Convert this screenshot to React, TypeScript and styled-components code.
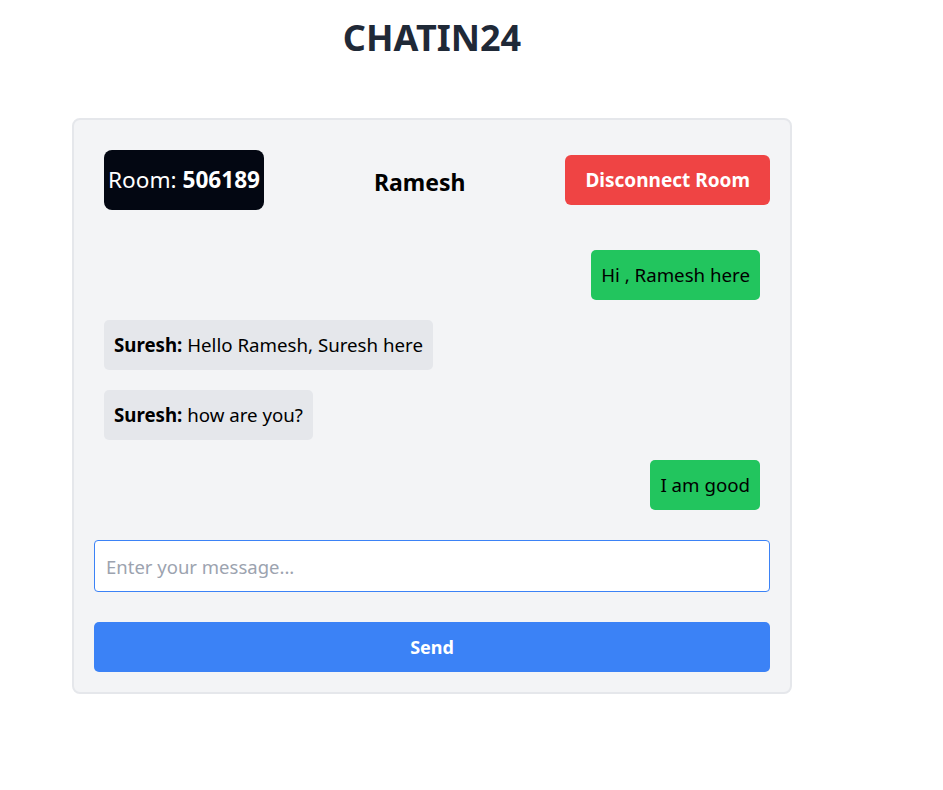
import React from "react";
import styled, { createGlobalStyle } from "styled-components";

const Global = createGlobalStyle`
  html, body { margin: 0; padding: 0; background: #ffffff; }
  body { font-family: "Noto Sans", "Open Sans", sans-serif; }
  * { box-sizing: border-box; }
`;

const Page = styled.div`
  padding-left: 72px;
  padding-top: 10px;
`;

const Column = styled.div`
  width: 720px;
  display: flex;
  flex-direction: column;
  align-items: stretch;
`;

const Title = styled.h1`
  margin: 0 0 52px 0;
  text-align: center;
  font-size: 36px;
  line-height: 56px;
  font-weight: 700;
  color: #1f2937;
`;

const Card = styled.div`
  border: 2px solid #e5e7eb;
  border-radius: 8px;
  background: #f3f4f6;
  padding: 20px;
  display: flex;
  flex-direction: column;
`;

const Header = styled.div`
  display: flex;
  align-items: center;
  justify-content: space-between;
`;

const RoomBadge = styled.div`
  margin: 10px;
  background: #030712;
  color: #ffffff;
  border-radius: 8px;
  padding: 16px 4px;
  font-size: 22.6px;
  line-height: 28px;
  white-space: nowrap;
  b { font-weight: 700; }
`;

const UserName = styled.div`
  font-size: 23px;
  font-weight: 700;
  color: #000000;
  margin-top: 3px;
`;

const DangerButton = styled.button`
  border: none;
  border-radius: 6px;
  background: #ef4444;
  color: #ffffff;
  font-family: inherit;
  font-size: 19px;
  font-weight: 700;
  height: 50px;
  padding: 0 20px;
`;

const Messages = styled.div`
  display: flex;
  flex-direction: column;
  padding: 20px 10px 20px;
`;

const Bubble = styled.div<{ $mine?: boolean }>`
  align-self: ${(p) => (p.$mine ? "flex-end" : "flex-start")};
  margin: 10px 0;
  padding: 10px;
  height: 50px;
  border-radius: 5px;
  background: ${(p) => (p.$mine ? "#22c55e" : "#e5e7eb")};
  color: #000000;
  font-size: 18.7px;
  line-height: 30px;
  white-space: nowrap;
  b { font-weight: 700; }
`;

const Input = styled.input`
  height: 52px;
  width: 100%;
  border: 1px solid #3b82f6;
  border-radius: 4px;
  background: #ffffff;
  padding: 0 11px;
  font-family: inherit;
  font-size: 18.5px;
  color: #111827;
  outline: none;
  &::placeholder { color: #9ca3af; }
`;

const SendButton = styled.button`
  margin-top: 30px;
  height: 50px;
  width: 100%;
  border: none;
  border-radius: 5px;
  background: #3b82f6;
  color: #ffffff;
  font-family: inherit;
  font-size: 18px;
  font-weight: 700;
`;

const messages = [
  { mine: true, text: "Hi , Ramesh here" },
  { mine: false, from: "Suresh", text: "Hello Ramesh, Suresh here" },
  { mine: false, from: "Suresh", text: "how are you?" },
  { mine: true, text: "I am good" },
];

export default function App() {
  return (
    <>
      <Global />
      <Page>
        <Column>
          <Title>CHATIN24</Title>
          <Card>
            <Header>
              <RoomBadge>
                Room: <b>506189</b>
              </RoomBadge>
              <UserName>Ramesh</UserName>
              <DangerButton>Disconnect Room</DangerButton>
            </Header>
            <Messages>
              {messages.map((m, i) => (
                <Bubble key={i} $mine={m.mine}>
                  {m.from && <b>{m.from}: </b>}
                  {m.text}
                </Bubble>
              ))}
            </Messages>
            <Input placeholder="Enter your message..." autoFocus />
            <SendButton>Send</SendButton>
          </Card>
        </Column>
      </Page>
    </>
  );
}
